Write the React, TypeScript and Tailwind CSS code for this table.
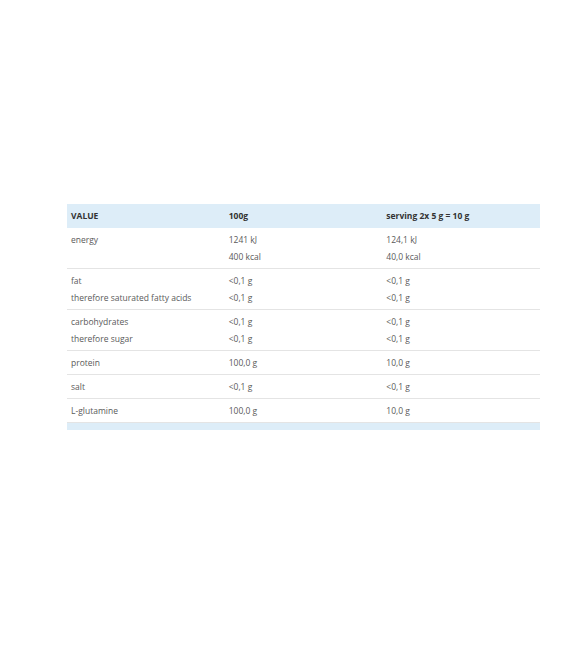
const rows: { label: string[]; per100: string[]; serving: string[] }[] = [
  { label: ['energy'], per100: ['1241 kJ', '400 kcal'], serving: ['124,1 kJ', '40,0 kcal'] },
  {
    label: ['fat', 'therefore saturated fatty acids'],
    per100: ['<0,1 g', '<0,1 g'],
    serving: ['<0,1 g', '<0,1 g'],
  },
  {
    label: ['carbohydrates', 'therefore sugar'],
    per100: ['<0,1 g', '<0,1 g'],
    serving: ['<0,1 g', '<0,1 g'],
  },
  { label: ['protein'], per100: ['100,0 g'], serving: ['10,0 g'] },
  { label: ['salt'], per100: ['<0,1 g'], serving: ['<0,1 g'] },
  { label: ['L-glutamine'], per100: ['100,0 g'], serving: ['10,0 g'] },
]

function Cell({ lines }: { lines: string[] }) {
  return (
    <td className="px-[4px] py-[3px] align-top">
      {lines.map((l, i) => (
        <div key={i} className="leading-[17px]">
          {l}
        </div>
      ))}
    </td>
  )
}

export default function App() {
  return (
    <div
      className="min-h-[649px] bg-white pt-[204px] px-[67px] text-[8.5px] text-[#5a5a5a]"
      style={{ fontFamily: '"Open Sans", sans-serif' }}
    >
      <table className="w-[473px] border-collapse table-fixed">
        <thead>
          <tr className="bg-[#ddedf8] text-[#333] h-[24px]">
            <th className="px-[4px] text-left font-bold">VALUE</th>
            <th className="px-[4px] text-left font-bold">100g</th>
            <th className="px-[4px] text-left font-bold">serving 2x 5 g = 10 g</th>
          </tr>
        </thead>
        <tbody>
          {rows.map((r) => (
            <tr key={r.label[0]} className="border-b border-[#e4e4e4]">
              <Cell lines={r.label} />
              <Cell lines={r.per100} />
              <Cell lines={r.serving} />
            </tr>
          ))}
        </tbody>
        <tfoot>
          <tr className="bg-[#ddedf8] h-[7px]">
            <td colSpan={3} />
          </tr>
        </tfoot>
      </table>
    </div>
  )
}
